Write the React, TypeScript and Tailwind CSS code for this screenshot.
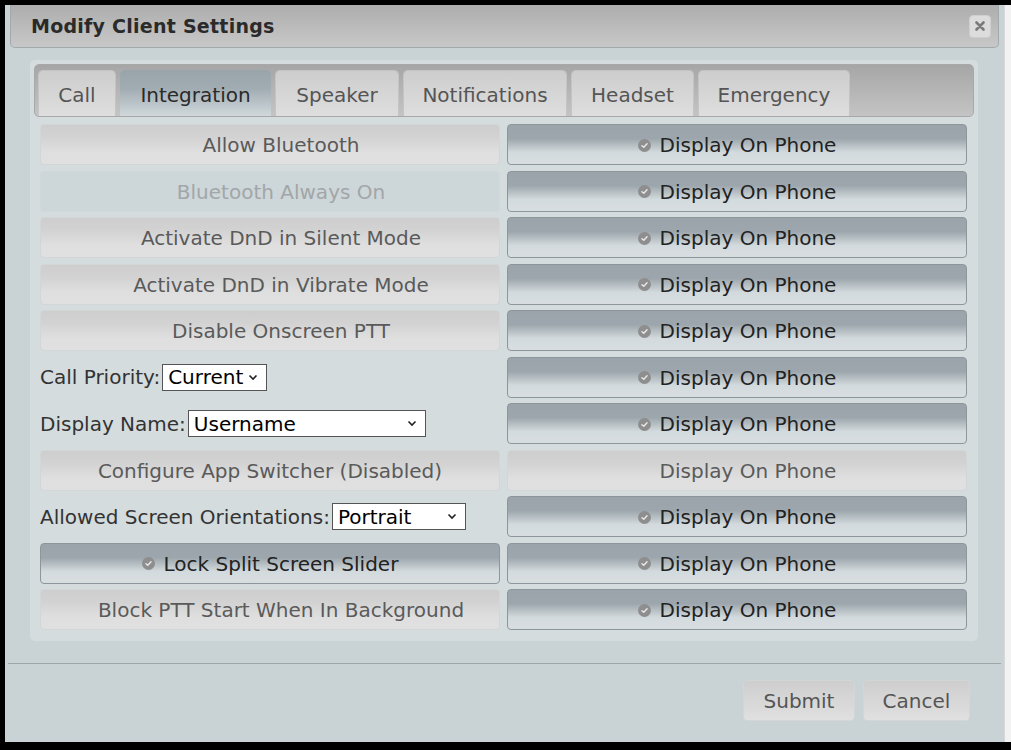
import React from "react";

const font = { fontFamily: '"DejaVu Sans", Verdana, sans-serif' };

function Check({ hidden }: { hidden?: boolean }) {
  return (
    <span
      className={`inline-flex h-[13px] w-[13px] items-center justify-center rounded-full bg-[#8e8e8e] mr-[9px] ${
        hidden ? "invisible" : ""
      }`}
    >
      <svg width="9" height="9" viewBox="0 0 10 10">
        <path d="M2.2 5.2 L4.2 7 L7.8 3" stroke="#e8e8e8" strokeWidth="1.6" fill="none" strokeLinecap="round" strokeLinejoin="round" />
      </svg>
    </span>
  );
}

type Kind = "on" | "off" | "disabled";

function Btn({ kind, label, noSpace }: { kind: Kind; label: string; noSpace?: boolean }) {
  if (kind === "on") {
    return (
      <div className="h-[41px] flex items-center justify-center pt-[1px] rounded-[4px] border border-[#8d969a] bg-[linear-gradient(to_bottom,#9aa4aa_0%,#9ca6ac_35%,#d3dadd_70%,#d8dee0_100%)] text-[#222] text-[20px]">
        <Check />
        <span>{label}</span>
      </div>
    );
  }
  if (kind === "off") {
    return (
      <div className="h-[41px] flex items-center justify-center pt-[1px] rounded-[4px] border border-[#d2d6d7] bg-[linear-gradient(to_bottom,#cecece_0%,#d2d2d2_30%,#dfdfdf_70%,#e0e0e0_100%)] text-[#5a5a5a] text-[20px]">
        {!noSpace && <Check hidden />}
        <span>{label}</span>
      </div>
    );
  }
  return (
    <div className="h-[41px] flex items-center justify-center pt-[1px] rounded-[4px] border border-[#cfd8da] bg-[#cdd6d8] text-[#a2a6a8] text-[20px]">
      <Check hidden />
      <span>{label}</span>
    </div>
  );
}

function Select({ value, w }: { value: string; w: string }) {
  return (
    <div className={`h-[27px] ${w} bg-white border border-[#555] flex items-center justify-between pl-[5px] pr-[8px] text-[20px] text-black`}>
      <span className="leading-none">{value}</span>
      <svg width="10" height="7" viewBox="0 0 10 7">
        <path d="M1.5 1.5 L5 5 L8.5 1.5" stroke="#222" strokeWidth="1.6" fill="none" />
      </svg>
    </div>
  );
}

function LabelSel({ label, value, w }: { label: string; value: string; w: string }) {
  return (
    <div className="h-[41px] flex items-center text-[20px] text-[#333]">
      <span className="mr-[2px]">{label}</span>
      <Select value={value} w={w} />
    </div>
  );
}

const tabs = ["Call", "Integration", "Speaker", "Notifications", "Headset", "Emergency"];
const tabW = ["w-[78px]", "w-[151px]", "w-[124px]", "w-[164px]", "w-[123px]", "w-[152px]"];

export default function App() {
  return (
    <div className="w-[1011px] h-[750px] bg-black pt-[5px] flex" style={font}>
      <div className="pl-[5px] flex h-[737px]">
        <div className="w-[999px] h-[737px] bg-[#c9d3d5] flex flex-col">
          {/* title bar */}
          <div className="mx-[5px] h-[43px] rounded-b-[5px] border border-t-0 border-[#a3a8aa] bg-[linear-gradient(to_bottom,#adadad,#c8c8c8)] flex items-center justify-between pl-[20px] pr-[7px]">
            <span className="text-[19px] tracking-[0.25px] font-bold text-[#2a2a2a] pt-[1px]">Modify Client Settings</span>
            <div className="w-[22px] h-[23px] rounded-[4px] bg-[#dcdcdc] border border-[#cfcfcf] flex items-center justify-center">
              <svg width="10" height="10" viewBox="0 0 10 10">
                <path d="M1.5 1.5 L8.5 8.5 M8.5 1.5 L1.5 8.5" stroke="#7a7a7a" strokeWidth="2.6" strokeLinecap="round" />
              </svg>
            </div>
          </div>
          {/* panel */}
          <div className="ml-[25px] mt-[12px] w-[948px] h-[581px] rounded-[5px] bg-[#d4dcde] p-[4px] pb-[11px] flex flex-col">
            <div className="h-[53px] rounded-[5px] border border-[#a8a8a8] bg-[linear-gradient(to_bottom,#a6a6a6,#c4c4c4)] flex items-end gap-[4px] pl-[3px]">
              {tabs.map((t, i) => (
                <div
                  key={t}
                  className={`${tabW[i]} h-[46px] pt-[3px] rounded-t-[5px] flex items-center justify-center text-[20px] ${
                    i === 1
                      ? "bg-[linear-gradient(to_bottom,#9aa5ab_0%,#a1acb2_40%,#d0d8db_100%)] text-[#2a2a2a]"
                      : "bg-[linear-gradient(to_bottom,#cdcdcd,#dedede)] text-[#555] border border-b-0 border-[#c4c4c4]"
                  }`}
                >
                  {t}
                </div>
              ))}
            </div>
            <div className="mt-[7px] px-[6px] grid grid-cols-[460px_460px] gap-x-[7px] gap-y-[5.5px]">
              <Btn kind="off" label="Allow Bluetooth" />
              <Btn kind="on" label="Display On Phone" />
              <Btn kind="disabled" label="Bluetooth Always On" />
              <Btn kind="on" label="Display On Phone" />
              <Btn kind="off" label="Activate DnD in Silent Mode" />
              <Btn kind="on" label="Display On Phone" />
              <Btn kind="off" label="Activate DnD in Vibrate Mode" />
              <Btn kind="on" label="Display On Phone" />
              <Btn kind="off" label="Disable Onscreen PTT" />
              <Btn kind="on" label="Display On Phone" />
              <LabelSel label="Call Priority:" value="Current" w="w-[105px]" />
              <Btn kind="on" label="Display On Phone" />
              <LabelSel label="Display Name:" value="Username" w="w-[238px]" />
              <Btn kind="on" label="Display On Phone" />
              <Btn kind="off" label="Configure App Switcher (Disabled)" noSpace />
              <Btn kind="off" label="Display On Phone" />
              <LabelSel label="Allowed Screen Orientations:" value="Portrait" w="w-[134px]" />
              <Btn kind="on" label="Display On Phone" />
              <Btn kind="on" label="Lock Split Screen Slider" />
              <Btn kind="on" label="Display On Phone" />
              <Btn kind="off" label="Block PTT Start When In Background" />
              <Btn kind="on" label="Display On Phone" />
            </div>
          </div>
          {/* footer */}
          <div className="mx-[3px] mt-[22px] border-t border-[#9fa7a9]" />
          <div className="flex justify-end gap-[8px] pr-[34px] mt-[16px]">
            <div className="w-[112px] h-[41px] pt-[1px] rounded-[4px] border border-[#d2d6d7] bg-[linear-gradient(to_bottom,#cecece,#e0e0e0)] flex items-center justify-center text-[20px] text-[#555]">Submit</div>
            <div className="w-[107px] h-[41px] pt-[1px] rounded-[4px] border border-[#d2d6d7] bg-[linear-gradient(to_bottom,#cecece,#e0e0e0)] flex items-center justify-center text-[20px] text-[#555]">Cancel</div>
          </div>
        </div>
      </div>
      <div className="w-[7px] h-[737px] bg-[#f2f2f2] border-l border-[#d8d8d8]" />
    </div>
  );
}
